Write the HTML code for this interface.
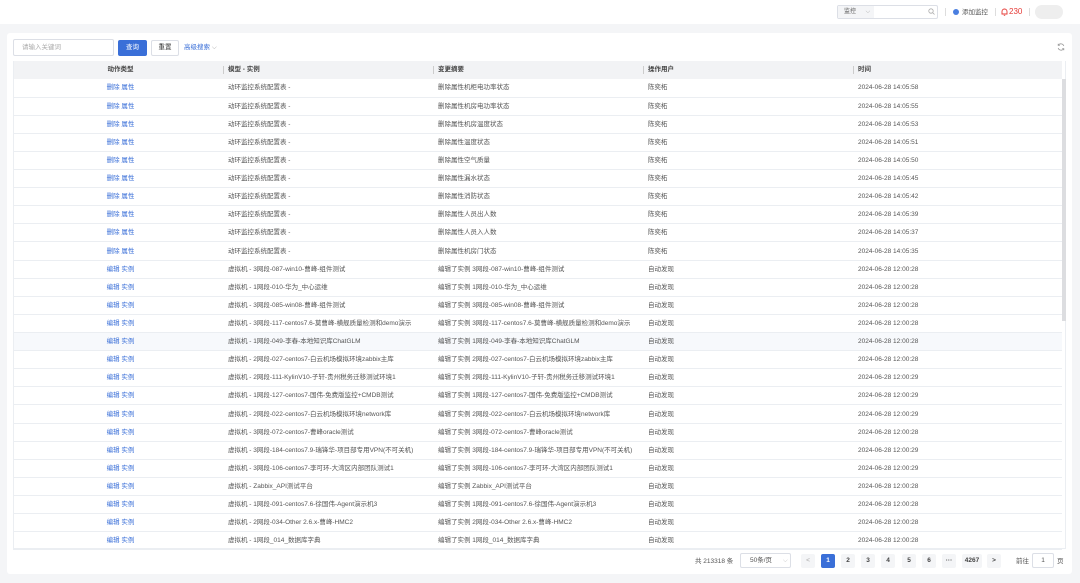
<!DOCTYPE html>
<html><head><meta charset="utf-8"><style>
*{box-sizing:border-box;margin:0;padding:0}
body{width:1080px;height:583px;background:#f4f5f7;font-family:"Liberation Sans","Noto Sans CJK SC",sans-serif;font-size:6.5px;line-height:9px;color:#555;position:relative;overflow:hidden}
.top{position:absolute;left:0;top:0;width:1080px;height:24px;background:#fff}
.card{position:absolute;left:7px;top:33px;width:1065px;height:541px;background:#fff;border-radius:3px}
.abs{position:absolute}
table{border-collapse:collapse;table-layout:fixed;position:absolute;left:13px;top:61px;width:1049px}
th{height:18px;line-height:18px;background:#f2f3f5;font-weight:bold;color:#444;text-align:left;padding:0 0 0 5px;position:relative;vertical-align:middle}
th:first-child{text-align:center}
th+th:before{content:"";position:absolute;left:0;top:5px;height:8px;border-left:1px solid #ccc}
td{height:18.12px;line-height:17px;border-bottom:1px solid #ebeef2;padding:0 0 0 5px;white-space:nowrap;overflow:hidden;vertical-align:middle}
td:first-child{text-align:center;color:#3a6fd8}
tr.h td{background:#f7f9fc}
.pg{position:absolute;top:554px;width:14px;height:14px;background:#f4f5f7;border-radius:2px;text-align:center;line-height:14px;font-weight:bold;color:#444;font-size:6.5px}
</style></head><body>
<div class="top">
 <div class="abs" style="left:837px;top:5px;width:101px;height:14px;border:1px solid #dcdfe6;border-radius:2px;background:#fff"></div>
 <div class="abs" style="left:838px;top:6px;width:36px;height:12px;background:#f4f5f7;font-size:6px;line-height:12px;padding-left:6px">监控 <span style="color:#aaa;margin-left:8px">⌵</span></div>
 <svg class="abs" style="left:928px;top:8px" width="7" height="7" viewBox="0 0 7 7"><circle cx="3" cy="3" r="2.2" fill="none" stroke="#aaa" stroke-width=".8"/><path d="M4.6 4.6L6.5 6.5" stroke="#aaa" stroke-width=".8"/></svg>
 <div class="abs" style="left:945px;top:8px;height:8px;border-left:1px solid #ddd"></div>
 <div class="abs" style="left:953px;top:9px;width:6px;height:6px;border-radius:50%;background:#4a7ee0"></div>
 <div class="abs" style="left:962px;top:7.5px;font-size:6.5px;line-height:9px">添加监控</div>
 <div class="abs" style="left:995px;top:8px;height:8px;border-left:1px solid #ddd"></div>
 <svg class="abs" style="left:1001px;top:8px" width="7" height="8" viewBox="0 0 7 8"><path d="M1 6V3.5a2.5 2.5 0 0 1 5 0V6H1zM0.5 6h6M2.8 7.3h1.4" fill="none" stroke="#e53935" stroke-width=".9"/></svg>
 <div class="abs" style="left:1009px;top:7px;font-size:8px;line-height:10px;color:#e53935">230</div>
 <div class="abs" style="left:1029px;top:8px;height:8px;border-left:1px solid #ddd"></div>
 <div class="abs" style="left:1035px;top:5px;width:28px;height:14px;border-radius:7px;background:#eee"></div>
</div>
<div class="card"></div>
<div class="abs" style="left:13px;top:39px;width:101px;height:17px;border:1px solid #dcdfe6;border-radius:2px;color:#aaa;padding-left:8px;line-height:15px">请输入关键词</div>
<div class="abs" style="left:118px;top:40px;width:29px;height:16px;background:#3a6fd8;border-radius:2px;color:#fff;text-align:center;line-height:16px">查询</div>
<div class="abs" style="left:151px;top:40px;width:28px;height:16px;border:1px solid #dcdfe6;border-radius:2px;color:#333;text-align:center;line-height:14px">重置</div>
<div class="abs" style="left:184px;top:43px;color:#3a6fd8">高级搜索 <span style="color:#999">⌵</span></div>
<svg class="abs" style="left:1057px;top:43px" width="8" height="8" viewBox="0 0 8 8"><path d="M6.8 3A3 3 0 0 0 1.4 2.2M1.2 5a3 3 0 0 0 5.4.8" fill="none" stroke="#999" stroke-width=".8"/><path d="M1.2 0.8v1.6h1.6M6.8 7.2V5.6H5.2" fill="none" stroke="#999" stroke-width=".8"/></svg>
<table>
<colgroup><col style="width:210px"><col style="width:210px"><col style="width:210px"><col style="width:210px"><col></colgroup>
<tr><th>动作类型</th><th>模型 - 实例</th><th>变更摘要</th><th>操作用户</th><th>时间</th></tr>
<tr><td>删除 属性</td><td>动环监控系统配置表 -</td><td>删除属性机柜电功率状态</td><td>陈奕柘</td><td>2024-06-28 14:05:58</td></tr>
<tr><td>删除 属性</td><td>动环监控系统配置表 -</td><td>删除属性机房电功率状态</td><td>陈奕柘</td><td>2024-06-28 14:05:55</td></tr>
<tr><td>删除 属性</td><td>动环监控系统配置表 -</td><td>删除属性机房温度状态</td><td>陈奕柘</td><td>2024-06-28 14:05:53</td></tr>
<tr><td>删除 属性</td><td>动环监控系统配置表 -</td><td>删除属性温度状态</td><td>陈奕柘</td><td>2024-06-28 14:05:51</td></tr>
<tr><td>删除 属性</td><td>动环监控系统配置表 -</td><td>删除属性空气质量</td><td>陈奕柘</td><td>2024-06-28 14:05:50</td></tr>
<tr><td>删除 属性</td><td>动环监控系统配置表 -</td><td>删除属性漏水状态</td><td>陈奕柘</td><td>2024-06-28 14:05:45</td></tr>
<tr><td>删除 属性</td><td>动环监控系统配置表 -</td><td>删除属性消防状态</td><td>陈奕柘</td><td>2024-06-28 14:05:42</td></tr>
<tr><td>删除 属性</td><td>动环监控系统配置表 -</td><td>删除属性人员出人数</td><td>陈奕柘</td><td>2024-06-28 14:05:39</td></tr>
<tr><td>删除 属性</td><td>动环监控系统配置表 -</td><td>删除属性人员入人数</td><td>陈奕柘</td><td>2024-06-28 14:05:37</td></tr>
<tr><td>删除 属性</td><td>动环监控系统配置表 -</td><td>删除属性机房门状态</td><td>陈奕柘</td><td>2024-06-28 14:05:35</td></tr>
<tr><td>编辑 实例</td><td>虚拟机 - 3网段-087-win10-曹峰-组件测试</td><td>编辑了实例 3网段-087-win10-曹峰-组件测试</td><td>自动发现</td><td>2024-06-28 12:00:28</td></tr>
<tr><td>编辑 实例</td><td>虚拟机 - 1网段-010-华为_中心运维</td><td>编辑了实例 1网段-010-华为_中心运维</td><td>自动发现</td><td>2024-06-28 12:00:28</td></tr>
<tr><td>编辑 实例</td><td>虚拟机 - 3网段-085-win08-曹峰-组件测试</td><td>编辑了实例 3网段-085-win08-曹峰-组件测试</td><td>自动发现</td><td>2024-06-28 12:00:28</td></tr>
<tr><td>编辑 实例</td><td>虚拟机 - 3网段-117-centos7.6-莫曹峰-横舰质量检测和demo演示</td><td>编辑了实例 3网段-117-centos7.6-莫曹峰-横舰质量检测和demo演示</td><td>自动发现</td><td>2024-06-28 12:00:28</td></tr>
<tr class="h"><td>编辑 实例</td><td>虚拟机 - 1网段-049-李春-本地知识库ChatGLM</td><td>编辑了实例 1网段-049-李春-本地知识库ChatGLM</td><td>自动发现</td><td>2024-06-28 12:00:28</td></tr>
<tr><td>编辑 实例</td><td>虚拟机 - 2网段-027-centos7-白云机场模拟环境zabbix主库</td><td>编辑了实例 2网段-027-centos7-白云机场模拟环境zabbix主库</td><td>自动发现</td><td>2024-06-28 12:00:28</td></tr>
<tr><td>编辑 实例</td><td>虚拟机 - 2网段-111-KylinV10-子轩-贵州税务迁移测试环境1</td><td>编辑了实例 2网段-111-KylinV10-子轩-贵州税务迁移测试环境1</td><td>自动发现</td><td>2024-06-28 12:00:29</td></tr>
<tr><td>编辑 实例</td><td>虚拟机 - 1网段-127-centos7-国伟-免费版监控+CMDB测试</td><td>编辑了实例 1网段-127-centos7-国伟-免费版监控+CMDB测试</td><td>自动发现</td><td>2024-06-28 12:00:29</td></tr>
<tr><td>编辑 实例</td><td>虚拟机 - 2网段-022-centos7-白云机场模拟环境network库</td><td>编辑了实例 2网段-022-centos7-白云机场模拟环境network库</td><td>自动发现</td><td>2024-06-28 12:00:29</td></tr>
<tr><td>编辑 实例</td><td>虚拟机 - 3网段-072-centos7-曹峰oracle测试</td><td>编辑了实例 3网段-072-centos7-曹峰oracle测试</td><td>自动发现</td><td>2024-06-28 12:00:28</td></tr>
<tr><td>编辑 实例</td><td>虚拟机 - 3网段-184-centos7.9-瑞锋华-项目部专用VPN(不可关机)</td><td>编辑了实例 3网段-184-centos7.9-瑞锋华-项目部专用VPN(不可关机)</td><td>自动发现</td><td>2024-06-28 12:00:29</td></tr>
<tr><td>编辑 实例</td><td>虚拟机 - 3网段-106-centos7-李可环-大湾区内部团队测试1</td><td>编辑了实例 3网段-106-centos7-李可环-大湾区内部团队测试1</td><td>自动发现</td><td>2024-06-28 12:00:29</td></tr>
<tr><td>编辑 实例</td><td>虚拟机 - Zabbix_API测试平台</td><td>编辑了实例 Zabbix_API测试平台</td><td>自动发现</td><td>2024-06-28 12:00:28</td></tr>
<tr><td>编辑 实例</td><td>虚拟机 - 1网段-091-centos7.6-徐国伟-Agent演示机3</td><td>编辑了实例 1网段-091-centos7.6-徐国伟-Agent演示机3</td><td>自动发现</td><td>2024-06-28 12:00:28</td></tr>
<tr><td>编辑 实例</td><td>虚拟机 - 2网段-034-Other 2.6.x-曹峰-HMC2</td><td>编辑了实例 2网段-034-Other 2.6.x-曹峰-HMC2</td><td>自动发现</td><td>2024-06-28 12:00:28</td></tr>
<tr><td>编辑 实例</td><td>虚拟机 - 1网段_014_数据库字典</td><td>编辑了实例 1网段_014_数据库字典</td><td>自动发现</td><td>2024-06-28 12:00:28</td></tr>
</table>
<div class="abs" style="left:13px;top:61px;width:1053px;height:488px;border:1px solid #ebeef2;border-top:none;pointer-events:none"></div>
<div class="abs" style="left:1062px;top:79px;width:4px;height:242px;background:#dcdde0"></div>
<div class="abs" style="left:695px;top:557px">共 213318 条</div>
<div class="abs" style="left:740px;top:553px;width:51px;height:15px;border:1px solid #dcdfe6;border-radius:2px;line-height:13px;padding-left:9px">50条/页 <span style="color:#bbb;margin-left:9px">⌵</span></div>
<div class="pg" style="left:801px;color:#bbb">&lt;</div>
<div class="pg" style="left:821px;background:#3a6fd8;color:#fff">1</div>
<div class="pg" style="left:841px">2</div>
<div class="pg" style="left:861px">3</div>
<div class="pg" style="left:881px">4</div>
<div class="pg" style="left:902px">5</div>
<div class="pg" style="left:922px">6</div>
<div class="pg" style="left:942px">···</div>
<div class="pg" style="left:962px;width:20px">4267</div>
<div class="pg" style="left:987px">&gt;</div>
<div class="abs" style="left:1016px;top:557px">前往</div>
<div class="abs" style="left:1032px;top:553px;width:22px;height:15px;border:1px solid #dcdfe6;border-radius:2px;text-align:center;line-height:13px">1</div>
<div class="abs" style="left:1057px;top:557px">页</div>
</body></html>
